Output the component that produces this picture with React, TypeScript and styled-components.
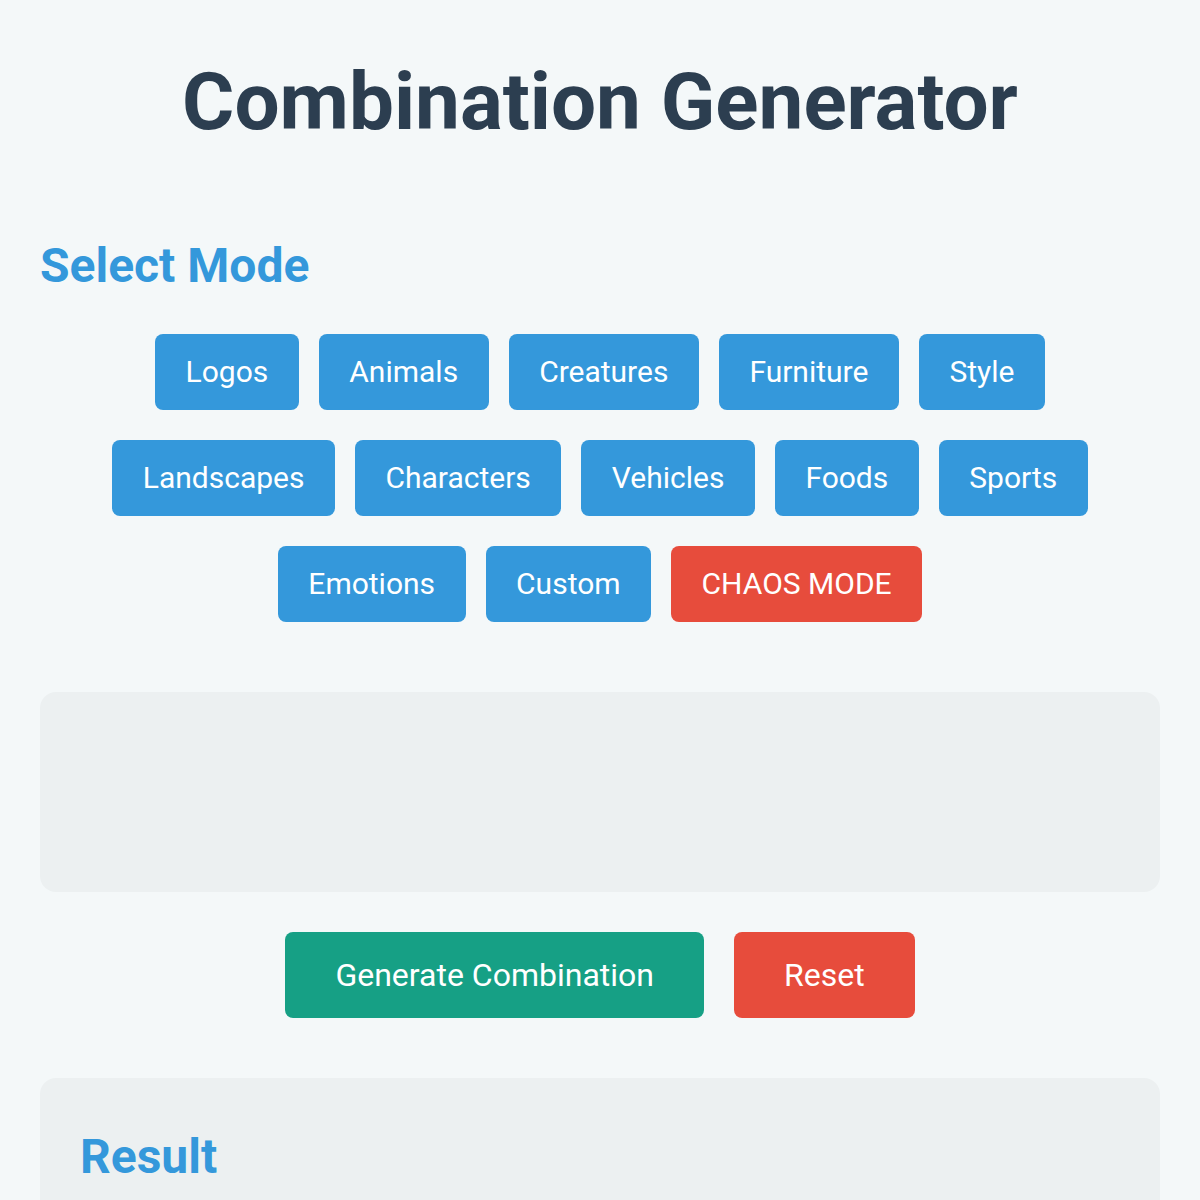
import styled, { createGlobalStyle } from 'styled-components';

const modes = [
  'Logos',
  'Animals',
  'Creatures',
  'Furniture',
  'Style',
  'Landscapes',
  'Characters',
  'Vehicles',
  'Foods',
  'Sports',
  'Emotions',
  'Custom',
];

const App = () => {
  return (
    <>
      <GlobalStyle />
      <Page>
        <Title>Combination Generator</Title>

        <ModeSection>
          <SectionTitle>Select Mode</SectionTitle>
          <ModeList>
            {modes.map((mode) => (
              <ModeButton key={mode}>{mode}</ModeButton>
            ))}
            <ModeButton $danger>CHAOS MODE</ModeButton>
          </ModeList>
        </ModeSection>

        <InputPanel />

        <Actions>
          <ActionButton $color="#16a085">Generate Combination</ActionButton>
          <ActionButton $color="#e74c3c">Reset</ActionButton>
        </Actions>

        <ResultPanel>
          <SectionTitle>Result</SectionTitle>
        </ResultPanel>
      </Page>
    </>
  );
};

export default App;

// --- Styled Components ---
const GlobalStyle = createGlobalStyle`
  html, body {
    margin: 0;
    background: #f4f8f9;
    font-family: Roboto, "Liberation Sans", sans-serif;
  }
`;

const Page = styled.div`
  padding: 40px 40px 0;
  height: 1200px;
  overflow: hidden;
  box-sizing: border-box;
`;

const Title = styled.h1`
  margin: 15px 0 0;
  text-align: center;
  font-size: 80px;
  font-weight: 700;
  color: #2c3e50;
`;

const ModeSection = styled.section`
  margin-top: 88px;
`;

const SectionTitle = styled.h2`
  margin: 0;
  font-size: 48px;
  font-weight: 700;
  color: #3498db;
`;

const ModeList = styled.div`
  display: flex;
  flex-wrap: wrap;
  justify-content: center;
  column-gap: 20px;
  row-gap: 30px;
  margin-top: 40px;
`;

const ModeButton = styled.button<{ $danger?: boolean }>`
  border: none;
  border-radius: 8px;
  padding: 20px 30.5px;
  font-family: inherit;
  font-size: 30px;
  line-height: 36px;
  color: #fff;
  background-color: ${({ $danger }) => ($danger ? '#e74c3c' : '#3498db')};
  cursor: pointer;
`;

const InputPanel = styled.div`
  height: 200px;
  margin-top: 70px;
  border-radius: 16px;
  background: #ecf0f1;
`;

const Actions = styled.div`
  display: flex;
  justify-content: center;
  gap: 30px;
  margin-top: 40px;
`;

const ActionButton = styled.button<{ $color: string }>`
  border: none;
  border-radius: 8px;
  padding: 24px 50px;
  font-family: inherit;
  font-size: 32px;
  color: #fff;
  background-color: ${({ $color }) => $color};
  cursor: pointer;
`;

const ResultPanel = styled.div`
  margin-top: 60px;
  padding: 50px 40px 40px;
  min-height: 300px;
  border-radius: 16px;
  background: #ecf0f1;
`;
